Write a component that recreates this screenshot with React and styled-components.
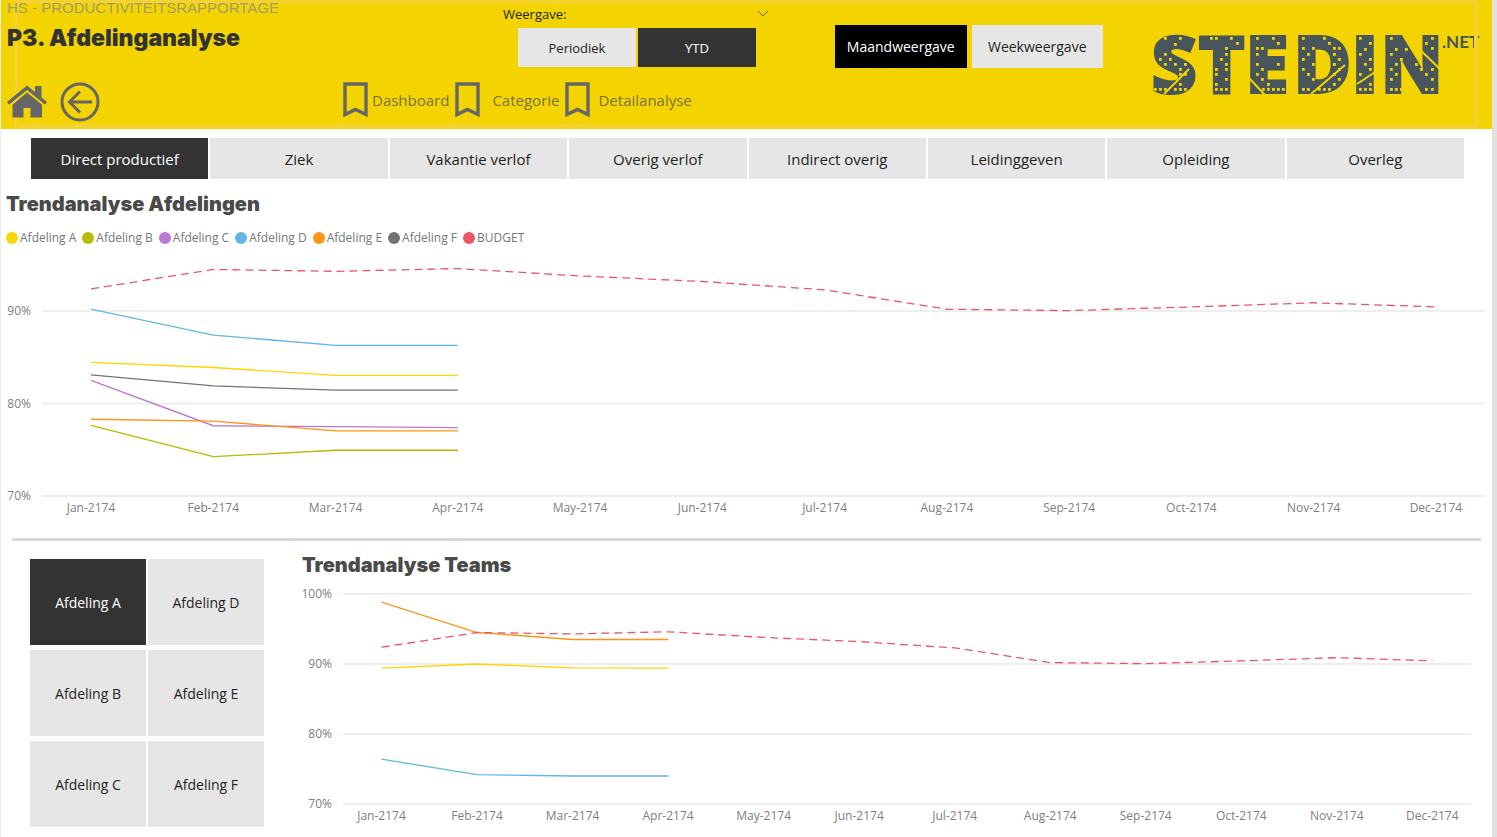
import React, { useState } from 'react';
import styled, { createGlobalStyle } from 'styled-components';

const GlobalStyle = createGlobalStyle`
    * {
        box-sizing: border-box;
    }
    body {
        margin: 0;
        background: #ffffff;
        color: #252423;
        font-family: "Open Sans", "Noto Sans", sans-serif;
        font-size: 14px;
    }
    button {
        font: inherit;
        border: 0;
        padding: 0;
        cursor: pointer;
    }
`

const Page = styled.div`
    min-height: 100vh;
    border-left: 1px solid #ececec;
    border-right: 5px solid #e0e0e0;
`

const Header = styled.header`
    position: relative;
    display: flex;
    height: 129px;
    padding-left: 6px;
    background: #f3d400;
`

const HeaderFrame = styled.div`
    position: absolute;
    top: 0;
    bottom: 1px;
    left: 13px;
    right: 14px;
    border: 4px solid #f5d32c;
    pointer-events: none;
`

const HeaderPart = styled.div`
    position: relative;
    width: ${props => props.width}px;
`

const ReportName = styled.p`
    margin: 0;
    color: #a39d6c;
    font-family: "Liberation Sans", Arial, sans-serif;
    font-size: 15px;
    line-height: 16px;
    white-space: nowrap;
`

const PageTitle = styled.h1`
    margin: 8px 0 30px;
    color: #333333;
    font-family: "Inter", "Liberation Sans", sans-serif;
    font-size: 23px;
    font-weight: 900;
    line-height: 28px;
`

const IconRow = styled.div`
    display: flex;
    align-items: center;
    gap: 13px;
`

const IconLink = styled.a`
    display: flex;
    color: #666666;
`

const Slicer = styled.div`
    width: 268px;
    margin: 4px 0 0 160px;
`

const SlicerHeader = styled.div`
    display: flex;
    align-items: center;
    justify-content: space-between;
    height: 20px;
    padding-right: 2px;
    font-size: 13px;
`

const ChevronButton = styled.button`
    display: flex;
    background: none;
    color: #6b6118;
`

const SlicerOptions = styled.div`
    display: flex;
    gap: 2px;
    width: 238px;
    margin: 4px 0 15px 15px;
`

const Tile = styled.button`
    flex: 1;
    height: ${props => props.$height}px;
    background: ${props => props.$active ? props.$activeColor || '#333333' : '#e6e6e6'};
    color: ${props => props.$active ? '#ffffff' : '#252423'};
    font-size: ${props => props.$size || 14}px;
`

const Bookmarks = styled.nav`
    display: flex;
    gap: 6px;
    font-size: 15px;
`

const Bookmark = styled.a`
    display: flex;
    align-items: center;
    gap: ${props => props.$gap}px;
    color: #7a7344;
    text-decoration: none;
`

const ViewButtons = styled.div`
    display: flex;
    gap: 5px;
    width: 268px;
    margin: 25px 0 0 65px;
`

const LogoWrapper = styled.div`
    margin: 30px 11px 0 auto;
`

const LogoDrawing = styled.svg`
    display: block;
    overflow: visible;
`

const Tabs = styled.nav`
    display: flex;
    gap: 2px;
    margin: 9px 28px 0 30px;
`

const Trend = styled.section`
    padding: 13px 7px 0 5px;
`

const SectionTitle = styled.h2`
    margin: 0;
    color: #4a4a4a;
    font-family: "Inter", "Liberation Sans", sans-serif;
    font-size: 20px;
    font-weight: 900;
    line-height: 24px;
`

const Legend = styled.ul`
    display: flex;
    gap: 6px;
    margin: 12px 0 15px;
    padding: 0;
    list-style: none;
    color: #777777;
    font-size: 12px;
    line-height: 20px;
`

const LegendItem = styled.li`
    display: flex;
    align-items: center;
    gap: 2px;
`

const LegendDot = styled.span`
    width: 12px;
    height: 12px;
    border-radius: 50%;
    background: ${props => props.color};
`

const ChartGrid = styled.div`
    display: grid;
    grid-template-columns: ${props => props.$axis}px 1fr;
    color: #808080;
    font-size: 12px;
    line-height: 16px;
`

const YAxis = styled.div`
    position: relative;
`

const YLabel = styled.span`
    position: absolute;
    right: 11px;
    transform: translateY(-50%);
`

const Plot = styled.svg`
    display: block;
    width: 100%;
    height: ${props => props.$height}px;
    overflow: visible;
`

const XAxis = styled.div`
    grid-column: 2;
    display: flex;
    justify-content: space-between;
    padding-top: 4px;
`

const XLabel = styled.span`
    width: ${props => props.width}px;
    text-align: center;
    white-space: nowrap;
`

const Divider = styled.hr`
    height: 3px;
    margin: 22px 11px 12px;
    border: 0;
    background: #d9d9d9;
`

const Bottom = styled.div`
    display: flex;
    align-items: flex-start;
    gap: 38px;
    padding: 0 21px 8px 29px;
`

const DepartmentSlicer = styled.div`
    display: grid;
    grid-template-columns: 1fr 1fr;
    gap: 5px 2px;
    flex: 0 0 234px;
    padding-top: 6px;
`

const Teams = styled.section`
    flex: 1;
    min-width: 0;
`

const TeamsChart = styled.div`
    margin-top: 17px;
`

const MONTHS = ['Jan', 'Feb', 'Mar', 'Apr', 'May', 'Jun', 'Jul', 'Aug', 'Sep', 'Oct', 'Nov', 'Dec']

const COLORS = {
    'Afdeling A': '#ffd500',
    'Afdeling B': '#bdb900',
    'Afdeling C': '#bb77d1',
    'Afdeling D': '#62b5e5',
    'Afdeling E': '#ff9416',
    'Afdeling F': '#737373',
    'BUDGET': '#ed5565',
}

const BUDGET = [92.4, 94.5, 94.3, 94.6, 93.8, 93.2, 92.3, 90.2, 90.05, 90.45, 90.9, 90.45]

const DEPARTMENT_SERIES = [
    { name: 'Afdeling A', values: [84.45, 83.9, 83.05, 83.05] },
    { name: 'Afdeling B', values: [77.65, 74.25, 74.95, 74.95] },
    { name: 'Afdeling C', values: [82.5, 77.6, 77.5, 77.4] },
    { name: 'Afdeling D', values: [90.2, 87.4, 86.3, 86.3] },
    { name: 'Afdeling E', values: [78.3, 78.1, 77.05, 77.05] },
    { name: 'Afdeling F', values: [83.1, 81.9, 81.45, 81.45] },
    { name: 'BUDGET', values: BUDGET, dashed: true },
]

const TEAM_SERIES = [
    { name: 'Afdeling A', values: [89.4, 90, 89.45, 89.4] },
    { name: 'Afdeling D', values: [76.4, 74.2, 74, 74] },
    { name: 'Afdeling E', values: [98.85, 94.5, 93.5, 93.5] },
    { name: 'BUDGET', values: BUDGET, dashed: true },
]

const TABS = [
    'Direct productief', 'Ziek', 'Vakantie verlof', 'Overig verlof',
    'Indirect overig', 'Leidinggeven', 'Opleiding', 'Overleg',
]

const DEPARTMENTS = ['Afdeling A', 'Afdeling D', 'Afdeling B', 'Afdeling E', 'Afdeling C', 'Afdeling F']

const LineChart = ({ series, ticks, max, height, width, axis, labelWidth, label }) => {
    const min = 70
    const toY = value => (max - value) / (max - min) * height
    const toX = index => labelWidth / 2 + index * (width - labelWidth) / 11
    return (
        <ChartGrid $axis={axis}>
            <YAxis>
                {ticks.map(tick => (
                    <YLabel key={tick} style={{ top: toY(tick) }}>{tick}%</YLabel>
                ))}
            </YAxis>
            <Plot
                $height={height}
                viewBox={`0 0 ${width} ${height}`}
                preserveAspectRatio="none"
                role="img"
                aria-label={label}
            >
                {ticks.map(tick => (
                    <line key={tick} x1="0" x2={width} y1={toY(tick)} y2={toY(tick)} stroke="#eeeeee" strokeWidth="2" />
                ))}
                {series.map(({ name, values, dashed }) => (
                    <polyline
                        key={name}
                        points={values.map((value, i) => `${toX(i)},${toY(value)}`).join(' ')}
                        fill="none"
                        stroke={COLORS[name]}
                        strokeWidth="1.3"
                        strokeDasharray={dashed ? '8 5' : undefined}
                        vectorEffect="non-scaling-stroke"
                    />
                ))}
            </Plot>
            <XAxis>
                {MONTHS.map(month => (
                    <XLabel key={month} width={labelWidth}>{month}-2174</XLabel>
                ))}
            </XAxis>
        </ChartGrid>
    )
}

const HomeIcon = () => (
    <svg width="40" height="34" viewBox="0 0 40 34" fill="currentColor">
        <path d="M20 0.5 L28 7 V1 H34.500 V12.500 L40 17 L37.800 19.500 L20 5 L2.200 19.500 L0 17 Z" />
        <path d="M20 7.500 L35 19.800 V32.500 H23.500 V23 H16.500 V32.500 H5.500 V19.800 Z" />
    </svg>
)

const BackIcon = () => (
    <svg width="40" height="40" viewBox="0 0 40 40" fill="none" stroke="currentColor" strokeWidth="3">
        <circle cx="20" cy="20" r="18" />
        <path d="M32 20 H9 M20 9.500 L9.500 20 L20 30.500" />
    </svg>
)

const BookmarkIcon = () => (
    <svg width="25" height="36" viewBox="0 0 25 36" fill="none" stroke="#666666" strokeWidth="3.4">
        <path d="M2 2 H23 V32.500 L12.500 27.500 L2 32.500 Z" />
    </svg>
)

const LOGO_LETTERS = [
    { letter: 'S', x: 0, size: 80, font: 'Open Sans' },
    { letter: 'T', x: 47, size: 80, font: 'Open Sans' },
    { letter: 'E', x: 94, size: 80, font: 'Open Sans' },
    { letter: 'D', x: 142, size: 80, font: 'Open Sans' },
    { letter: 'I', x: 200, size: 80, font: 'Open Sans' },
    { letter: 'N', x: 231, size: 78, font: 'Inter' },
]

// lit windows in the letters of the logo
const LOGO_WINDOWS = [
    [14, 8], [29, 8], [24, 14], [14, 24], [9, 29], [19, 29], [14, 34], [24, 34], [29, 39], [34, 34],
    [34, 44], [29, 44], [4, 59], [9, 59], [14, 59], [24, 59], [29, 59], [34, 59], [29, 54],
    [60, 8], [65, 8], [80, 8], [86, 13], [75, 18], [75, 24], [70, 29], [75, 34], [65, 39], [75, 39],
    [65, 44], [75, 49], [65, 54], [65, 59], [70, 59], [75, 59],
    [106, 8], [122, 8], [127, 13], [106, 18], [111, 18], [106, 24], [106, 34], [111, 39], [127, 34],
    [106, 44], [111, 49], [117, 54], [112, 59], [117, 59], [122, 59], [127, 59], [132, 59],
    [152, 8], [173, 8], [178, 13], [152, 18], [162, 18], [157, 24], [152, 29], [162, 34], [152, 39],
    [157, 44], [162, 49], [152, 59], [157, 59], [168, 59], [173, 59], [178, 59], [183, 54],
    [183, 18], [188, 18], [183, 24], [188, 29], [183, 34], [188, 39], [183, 44], [188, 49],
    [209, 8], [219, 13], [214, 19], [209, 24], [219, 29], [214, 34], [219, 39], [209, 44],
    [209, 59], [214, 59], [219, 59], [219, 54],
    [240, 8], [245, 19], [255, 19], [240, 24], [250, 29], [240, 39], [245, 34], [240, 49], [245, 44],
    [240, 59], [245, 59], [250, 59], [281, 8], [275, 13], [281, 18], [265, 34], [270, 39], [281, 39],
    [275, 44], [281, 49], [275, 59], [281, 59],
]

const StedinLogo = () => (
    <LogoDrawing width="330" height="70" viewBox="0 0 330 70" role="img" aria-label="Stedin.net">
        <g fill="#48555a" stroke="#48555a" strokeWidth="2" fontWeight="800">
            {LOGO_LETTERS.map(({ letter, x, size, font }) => (
                <text key={letter} x={x} y="63" fontSize={size} fontFamily={`${font}, sans-serif`}>
                    {letter}
                </text>
            ))}
        </g>
        <g fill="#f3d400">
            {LOGO_WINDOWS.map(([x, y]) => (
                <rect key={`${x}-${y}`} x={x - 1} y={y - 1} width="2.800" height="2.800" />
            ))}
        </g>
        <path
            d="M13 64 L38 39 M98 48 L114 65 M160 64 L194 35 M206 54 L224 42 M265 16 L290 40"
            fill="none"
            stroke="#f3d400"
            strokeWidth="2"
        />
        <text x="291" y="18" fill="#48555a" fontFamily="Lato, sans-serif" fontSize="17" fontWeight="700">.NET</text>
    </LogoDrawing>
)

const App = () => {
    const [period, setPeriod] = useState('YTD')
    const [view, setView] = useState('Maandweergave')
    const [tab, setTab] = useState('Direct productief')
    const [department, setDepartment] = useState('Afdeling A')

    return (
        <Page>
            <GlobalStyle />
            <Header>
                <HeaderFrame />
                <HeaderPart width={336}>
                    <ReportName>HS - PRODUCTIVITEITSRAPPORTAGE</ReportName>
                    <PageTitle>P3. Afdelinganalyse</PageTitle>
                    <IconRow>
                        <IconLink href="#home" aria-label="Home"><HomeIcon /></IconLink>
                        <IconLink href="#terug" aria-label="Terug"><BackIcon /></IconLink>
                    </IconRow>
                </HeaderPart>
                <HeaderPart width={427}>
                    <Slicer>
                        <SlicerHeader>
                            <span>Weergave:</span>
                            <ChevronButton aria-label="Weergave kiezen">
                                <svg width="12" height="8" viewBox="0 0 12 8" fill="none" stroke="currentColor">
                                    <path d="M1 1 L6 6 L11 1" />
                                </svg>
                            </ChevronButton>
                        </SlicerHeader>
                        <SlicerOptions>
                            {['Periodiek', 'YTD'].map(option => (
                                <Tile
                                    key={option}
                                    $height={39}
                                    $size={13}
                                    $active={option === period}
                                    onClick={() => setPeriod(option)}
                                >
                                    {option}
                                </Tile>
                            ))}
                        </SlicerOptions>
                    </Slicer>
                    <Bookmarks>
                        <Bookmark href="#dashboard" $gap={4}><BookmarkIcon />Dashboard</Bookmark>
                        <Bookmark href="#categorie" $gap={12}><BookmarkIcon />Categorie</Bookmark>
                        <Bookmark href="#detailanalyse" $gap={8}><BookmarkIcon />Detailanalyse</Bookmark>
                    </Bookmarks>
                </HeaderPart>
                <ViewButtons>
                    {['Maandweergave', 'Weekweergave'].map(option => (
                        <Tile
                            key={option}
                            $height={43}
                            $active={option === view}
                            $activeColor="#000000"
                            onClick={() => setView(option)}
                        >
                            {option}
                        </Tile>
                    ))}
                </ViewButtons>
                <LogoWrapper>
                    <StedinLogo />
                </LogoWrapper>
            </Header>
            <Tabs>
                {TABS.map(name => (
                    <Tile key={name} $height={41} $size={15} $active={name === tab} onClick={() => setTab(name)}>
                        {name}
                    </Tile>
                ))}
            </Tabs>
            <Trend>
                <SectionTitle>Trendanalyse Afdelingen</SectionTitle>
                <Legend>
                    {Object.keys(COLORS).map(name => (
                        <LegendItem key={name}>
                            <LegendDot color={COLORS[name]} />
                            {name}
                        </LegendItem>
                    ))}
                </Legend>
                <LineChart
                    label="Trendanalyse Afdelingen"
                    series={DEPARTMENT_SERIES}
                    ticks={[90, 80, 70]}
                    max={95.2}
                    height={233}
                    width={1443}
                    axis={36}
                    labelWidth={98}
                />
            </Trend>
            <Divider />
            <Bottom>
                <DepartmentSlicer>
                    {DEPARTMENTS.map(name => (
                        <Tile
                            key={name}
                            $height={86}
                            $active={name === department}
                            onClick={() => setDepartment(name)}
                        >
                            {name}
                        </Tile>
                    ))}
                </DepartmentSlicer>
                <Teams>
                    <SectionTitle>Trendanalyse Teams</SectionTitle>
                    <TeamsChart>
                        <LineChart
                            label="Trendanalyse Teams"
                            series={TEAM_SERIES}
                            ticks={[100, 90, 80, 70]}
                            max={100}
                            height={210}
                            width={1127}
                            axis={41}
                            labelWidth={77}
                        />
                    </TeamsChart>
                </Teams>
            </Bottom>
        </Page>
    )
}

export default App
